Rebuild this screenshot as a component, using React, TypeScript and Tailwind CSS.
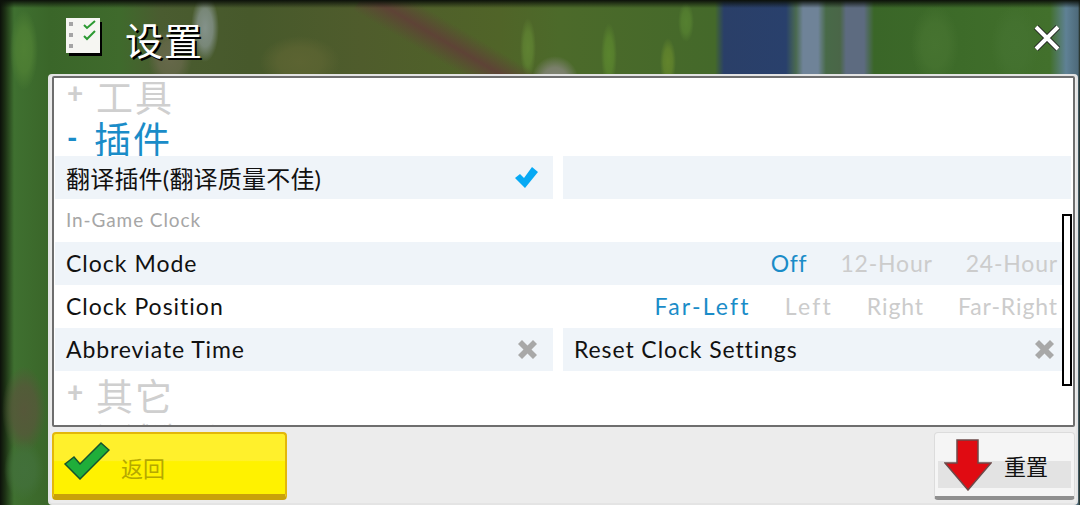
import React from "react";

const sans = "font-['Lato','Noto_Sans_CJK_SC',sans-serif]";

function Row({ shaded, children }: { shaded?: boolean; children: React.ReactNode }) {
  return <div className={"flex h-[43px] items-center pl-[11px] pr-[13px] " + (shaded ? "bg-[#eff4f9]" : "")}>{children}</div>;
}

function Heading({ sign, text, active }: { sign: string; text: string; active?: boolean }) {
  return (
    <div className={"flex h-[39px] items-center pl-[12px] " + (active ? "pt-[5px] text-[#1a8cc8]" : "text-[#cfcfcf]")}>
      <span className={"w-[29px] text-[28px] leading-none font-black " + (active ? "-translate-y-[2px]" : "-translate-y-[6px]")}>{sign}</span>
      <span className={"text-[37px] leading-none tracking-[2px] " + (active ? "-ml-[2px]" : "")}>{text}</span>
    </div>
  );
}

function Cross() {
  return (
    <svg width="21" height="21" viewBox="0 0 21 21" className="shrink-0">
      <path d="M1 5 L5 1 L10.5 6.5 L16 1 L20 5 L14.5 10.5 L20 16 L16 20 L10.5 14.5 L5 20 L1 16 L6.5 10.5 Z" fill="#a8a8a8" />
    </svg>
  );
}

function Option({ label, on, wide }: { label: string; on?: boolean; wide?: boolean }) {
  return <span className={(on ? "text-[#1a8cc8]" : "text-[#cccccc]") + (wide ? " tracking-[2.2px]" : "")}>{label}</span>;
}

const bands: [number, string][] = [
  [0, "#0c110a"], [5, "#1c3014"], [14, "#3f7030"], [50, "#3a6629"], [120, "#3f6a2c"], [160, "#4a5c30"],
  [250, "#47592b"], [360, "#4f5c2c"], [500, "#506428"], [560, "#4c6a2a"], [715, "#44692a"],
  [724, "#2a3f68"], [786, "#29406c"], [796, "#4a6a50"], [803, "#6f8398"], [818, "#6f8398"], [826, "#486a48"],
  [840, "#4a6648"], [846, "#5d6b80"], [864, "#5d6b80"], [874, "#3a6628"], [960, "#3d6b29"], [1050, "#42702c"],
  [1066, "#5f8195"], [1078, "#4e6a7a"], [1080, "#20281c"],
];

const blobs: [number, number, number, number, string][] = [
  [205, 28, 14, 34, "#84928a"],
  [170, 58, 22, 30, "#66684a"],
  [300, 62, 40, 26, "#5c6432"],
  [555, 82, 24, 26, "#85857a"],
  [528, 48, 8, 30, "#5f8232"],
  [609, 55, 8, 32, "#5a842e"],
  [668, 62, 8, 24, "#62842c"],
  [686, 22, 8, 20, "#558030"],
  [935, 45, 24, 40, "#467330"],
  [1015, 45, 24, 40, "#447230"],
  [24, 50, 14, 40, "#4f8034"],
  [24, 410, 22, 44, "#56583a"],
  [24, 470, 20, 30, "#42703a"],
];

function Scene() {
  return (
    <svg className="absolute inset-0" width="1080" height="505" viewBox="0 0 1080 505">
      <defs>
        <linearGradient id="base" x1="0" x2="1080" y1="0" y2="0" gradientUnits="userSpaceOnUse">
          {bands.map(([x, c]) => (
            <stop key={x} offset={x / 1080} stopColor={c} />
          ))}
        </linearGradient>
        <linearGradient id="top" x1="0" x2="0" y1="0" y2="8" gradientUnits="userSpaceOnUse">
          <stop offset="0" stopColor="#0c110a" />
          <stop offset="1" stopColor="#0c110a" stopOpacity="0" />
        </linearGradient>
        <linearGradient id="beam" x1="447" x2="427" y1="20" y2="54" gradientUnits="userSpaceOnUse">
          <stop offset="0" stopColor="#5e4336" stopOpacity="0" />
          <stop offset="0.5" stopColor="#5e4336" />
          <stop offset="1" stopColor="#5e4336" stopOpacity="0" />
        </linearGradient>
        {blobs.map(([cx, cy, , , c]) => (
          <radialGradient key={cx + "-" + cy} id={"b" + cx + "-" + cy}>
            <stop offset="0" stopColor={c} />
            <stop offset="0.55" stopColor={c} stopOpacity="0.8" />
            <stop offset="1" stopColor={c} stopOpacity="0" />
          </radialGradient>
        ))}
      </defs>
      <rect width="1080" height="505" fill="url(#base)" />
      {blobs.map(([cx, cy, rx, ry]) => (
        <ellipse key={cx + "-" + cy} cx={cx} cy={cy} rx={rx} ry={ry} fill={"url(#b" + cx + "-" + cy + ")"} />
      ))}
      <path d="M 380 -30 L 550 72 L 510 132 L 340 30 Z" fill="url(#beam)" />
      <rect width="1080" height="8" fill="url(#top)" />
    </svg>
  );
}

export default function App() {
  return (
    <div className={"relative h-[505px] w-[1080px] overflow-hidden bg-[#2f5a23] " + sans}>
      <Scene />

      <div className="relative flex h-[74px] items-center pl-[66px] pr-[18px] pt-[3px]">
        <svg width="38" height="40" viewBox="0 0 38 40" className="mb-[1px] shrink-0">
          <rect x="3" y="4" width="33" height="34" fill="#000" />
          <rect x="0" y="0" width="34" height="35" fill="#f6f6f2" />
          <rect x="3" y="4" width="4" height="4" fill="#a5a5a5" />
          <rect x="3" y="15" width="4" height="4" fill="#a5a5a5" />
          <rect x="3" y="26" width="4" height="4" fill="#a5a5a5" />
          <path d="M18 7 L21 10 L29 3" fill="none" stroke="#2c9a32" strokeWidth="2" />
          <path d="M18 18 L21 21 L29 13" fill="none" stroke="#2c9a32" strokeWidth="2" />
        </svg>
        <span className="ml-[21px] mt-[3px] text-[38px] leading-none tracking-[1px] text-white [text-shadow:2px_2px_0_#000]">设置</span>
        <svg width="30" height="30" viewBox="0 0 30 30" className="ml-auto mb-[2px]">
          <path d="M4 4 L26 26 M26 4 L4 26" stroke="#222" strokeWidth="6" />
          <path d="M4 4 L26 26 M26 4 L4 26" stroke="#fff" strokeWidth="4" />
        </svg>
      </div>

      <div className="relative ml-[48px] h-[431px] w-[1030px] rounded-[4px] border-2 border-[#e4e4e4] bg-[#ececec]">
        <div className="relative ml-[2px] mr-[1px] h-[351px] overflow-hidden rounded-[2px] border-2 border-[#6e6e6e] bg-white">
          <div className="ml-[1px] mr-[2px]">
            <Heading sign="+" text="工具" />
            <Heading sign="-" text="插件" active />
            <div className="flex h-[43px] gap-[10px]">
              <div className="flex w-[498px] items-center bg-[#eff4f9] pl-[11px] pr-[14px] text-[24px] tracking-[0.2px] text-[#111]">
                <span className="pt-[3px]">翻译插件(翻译质量不佳)</span>
                <svg width="26" height="26" viewBox="0 0 26 26" className="ml-auto">
                  <path d="M2 13 L7 9 L11 13 L19 2 L25 7 L12 23 Z" fill="#07a9f4" />
                </svg>
              </div>
              <div className="flex-1 bg-[#eff4f9]" />
            </div>
            <Row>
              <span className="text-[19px] tracking-[0.9px] text-[#a6a6a6]">In-Game Clock</span>
            </Row>
            <Row shaded>
              <span className="text-[23px] tracking-[1px] text-[#111]">Clock Mode</span>
              <div className="ml-auto flex gap-[33px] text-[23px] tracking-[0.8px]">
                <Option label="Off" on />
                <Option label="12-Hour" />
                <Option label="24-Hour" />
              </div>
            </Row>
            <Row>
              <span className="text-[23px] tracking-[1px] text-[#111]">Clock Position</span>
              <div className="ml-auto flex gap-[34px] text-[23px] tracking-[0.9px]">
                <Option label="Far-Left" on wide />
                <Option label="Left" wide />
                <Option label="Right" />
                <Option label="Far-Right" />
              </div>
            </Row>
            <div className="flex h-[43px] gap-[10px] text-[23px] tracking-[0.9px] text-[#111]">
              <div className="flex w-[498px] items-center bg-[#eff4f9] pl-[11px] pr-[15px]">
                <span>Abbreviate Time</span>
                <span className="ml-auto flex"><Cross /></span>
              </div>
              <div className="flex flex-1 items-center bg-[#eff4f9] pl-[11px] pr-[16px]">
                <span>Reset Clock Settings</span>
                <span className="ml-auto flex"><Cross /></span>
              </div>
            </div>
            <div className="mt-[6px]">
              <Heading sign="+" text="其它" />
            </div>
            <div className="mt-[7px] pl-[41px] text-[28px] leading-none text-[#cfcfcf]">调试选项设置</div>
          </div>
          <div className="absolute right-[1px] top-[136px] h-[172px] w-[10px] border-2 border-black bg-white" />
        </div>

        <div className="flex h-[70px] items-start justify-between pl-[2px] pr-[1px] pt-[5px]">
          <button className="flex h-[68px] w-[235px] items-center rounded-[4px] border-2 border-b-[6px] border-[#e3b70a] border-b-[#c9a10a] bg-[linear-gradient(#fff02c_0%,#fff02c_44%,#fff200_46%,#fff200_100%)] pl-[10px]">
            <svg width="46" height="38" viewBox="0 0 46 38" className="mb-[6px] shrink-0">
              <path d="M1 22 L10 15 L16 22 L37 1 L45 8 L16 37 Z" fill="#1fae3a" stroke="#14532d" strokeWidth="1.5" />
            </svg>
            <span className="mt-[10px] ml-[11px] text-[22px] leading-none text-[#b5a800]">返回</span>
          </button>
          <button className="relative flex h-[68px] w-[141px] items-center rounded-[4px] border border-b-[4px] border-[#dcdcdc] border-b-[#8f8f8f] bg-[#f5f5f5] pl-[9px]">
            <div className="absolute bottom-[8px] left-[3px] right-[3px] top-[28px] bg-[#e3e3e3]" />
            <svg width="48" height="52" viewBox="0 0 48 52" className="relative shrink-0">
              <path d="M13 1 L34 1 L34 24 L47 24 L24 51 L1 24 L13 24 Z" fill="#e00b12" stroke="#6d4a4a" strokeWidth="1.5" />
            </svg>
            <span className="relative ml-[12px] mt-[4px] text-[22px] leading-none text-[#111]">重置</span>
          </button>
        </div>
      </div>
    </div>
  );
}
